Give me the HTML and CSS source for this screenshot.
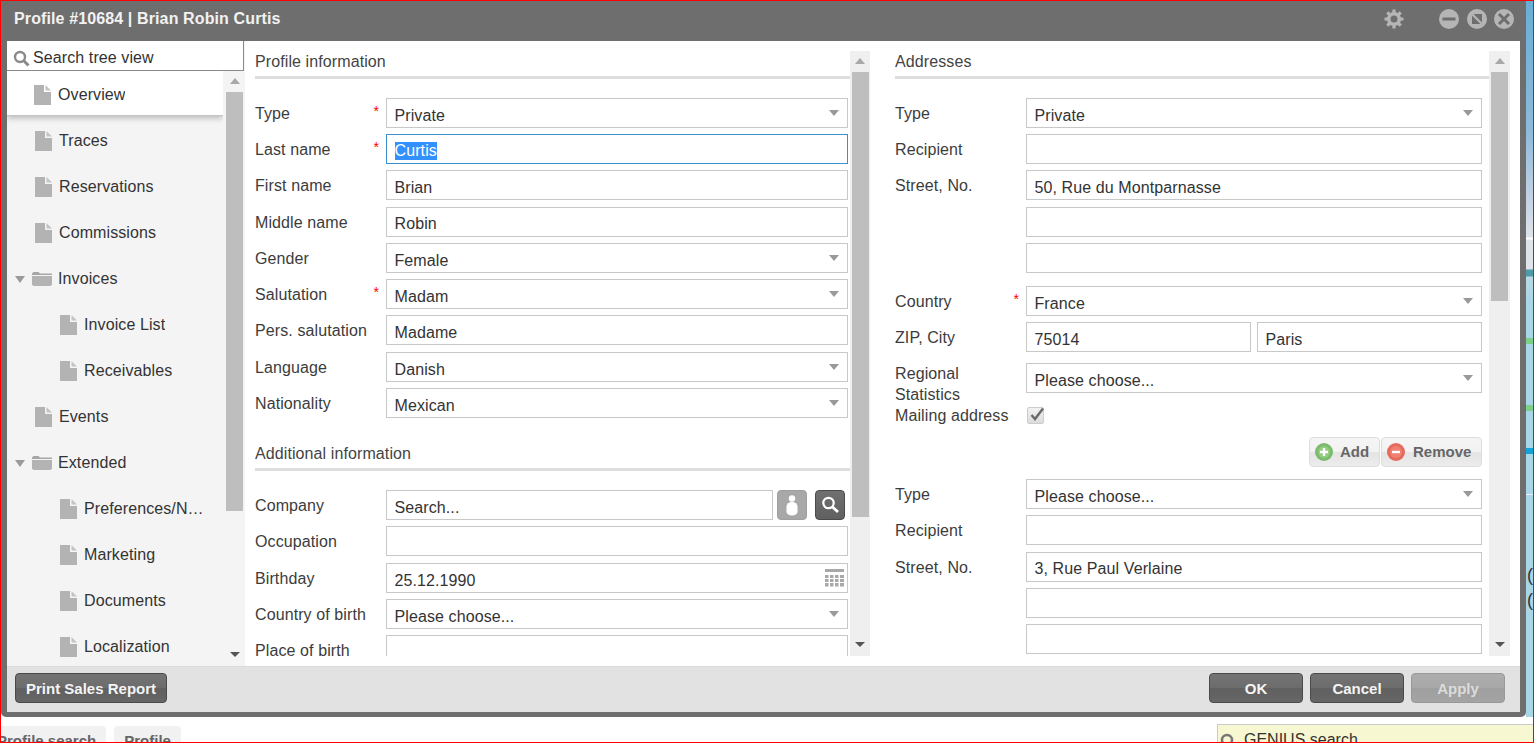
FILE: index.html
```html
<!DOCTYPE html>
<html lang="en">
<head>
    <meta charset="UTF-8">
    <title>Profile #10684 | Brian Robin Curtis</title>
    <link rel="stylesheet" href="styles.css">
</head>
<body>
<div class="desktop">
    <div class="side-strip"><span class="paren paren-one">(</span><span class="paren paren-two">(</span></div>

    <div class="tabs">
        <div class="tab">Profile search</div>
        <div class="tab">Profile</div>
    </div>

    <div class="genius">
        <svg class="genius-icon" width="16" height="16" viewBox="0 0 16 16"><circle cx="7" cy="7" r="5" fill="none" stroke="#777" stroke-width="2.5"/></svg>
        <span>GENIUS search</span>
    </div>

    <div class="dialog">
        <div class="dialog-header">
            <div class="dialog-title">Profile #10684 | Brian Robin Curtis</div>
            <svg class="gear" width="22" height="22" viewBox="0 0 22 22">
                <path d="M11 1.500v4M11 16.500v4M1.500 11h4M16.500 11h4M4.300 4.300l2.800 2.800M14.900 14.900l2.800 2.800M17.700 4.300l-2.800 2.800M7.100 14.900l-2.800 2.800" stroke="#b5b5b5" stroke-width="3.200"/>
                <circle cx="11" cy="11" r="5.300" fill="none" stroke="#b5b5b5" stroke-width="3.600"/>
            </svg>
            <div class="win-buttons">
                <svg width="20" height="20" viewBox="0 0 20 20"><circle cx="10" cy="10" r="10" fill="#b5b5b5"/><rect x="3.500" y="8.500" width="13" height="3" fill="#6e6e6e"/></svg>
                <svg width="20" height="20" viewBox="0 0 20 20"><circle cx="10" cy="10" r="10" fill="#b5b5b5"/><rect x="5" y="5" width="10" height="10" fill="#6e6e6e"/><path d="M4.500 4.500L15.500 15.500" stroke="#b5b5b5" stroke-width="2.200"/></svg>
                <svg width="20" height="20" viewBox="0 0 20 20"><circle cx="10" cy="10" r="10" fill="#b5b5b5"/><path d="M5 5L15 15M15 5L5 15" stroke="#6e6e6e" stroke-width="3"/></svg>
            </div>
        </div>

        <div class="dialog-body">
            <div class="tree-pane">
                <div class="tree-search">
                    <svg width="17" height="17" viewBox="0 0 17 17"><circle cx="7" cy="7" r="5" fill="none" stroke="#8a8a8a" stroke-width="2.400"/><path d="M10.800 10.800L15.500 15.500" stroke="#8a8a8a" stroke-width="3"/></svg>
                    <input class="tree-search-input" placeholder="Search tree view">
                </div>
                <div class="tree-main">
                    <div class="tree-list">
                        <div class="tree-item tree-active"><svg class="doc"><use href="#doc"/></svg><span class="tree-text">Overview</span></div>
                        <div class="tree-item"><svg class="doc"><use href="#doc"/></svg><span class="tree-text">Traces</span></div>
                        <div class="tree-item"><svg class="doc"><use href="#doc"/></svg><span class="tree-text">Reservations</span></div>
                        <div class="tree-item"><svg class="doc"><use href="#doc"/></svg><span class="tree-text">Commissions</span></div>
                        <div class="tree-item tree-folder"><span class="tree-arrow"></span><svg class="folder"><use href="#folder"/></svg><span class="tree-text">Invoices</span></div>
                        <div class="tree-item tree-sub"><svg class="doc"><use href="#doc"/></svg><span class="tree-text">Invoice List</span></div>
                        <div class="tree-item tree-sub"><svg class="doc"><use href="#doc"/></svg><span class="tree-text">Receivables</span></div>
                        <div class="tree-item"><svg class="doc"><use href="#doc"/></svg><span class="tree-text">Events</span></div>
                        <div class="tree-item tree-folder"><span class="tree-arrow"></span><svg class="folder"><use href="#folder"/></svg><span class="tree-text">Extended</span></div>
                        <div class="tree-item tree-sub"><svg class="doc"><use href="#doc"/></svg><span class="tree-text">Preferences/Notes</span></div>
                        <div class="tree-item tree-sub"><svg class="doc"><use href="#doc"/></svg><span class="tree-text">Marketing</span></div>
                        <div class="tree-item tree-sub"><svg class="doc"><use href="#doc"/></svg><span class="tree-text">Documents</span></div>
                        <div class="tree-item tree-sub"><svg class="doc"><use href="#doc"/></svg><span class="tree-text">Localization</span></div>
                    </div>
                    <div class="scrollbar tree-scrollbar">
                        <span class="sb-up"></span>
                        <span class="sb-thumb"></span>
                        <span class="sb-down"></span>
                    </div>
                </div>
            </div>

            <div class="content">
                <div class="column column-left">
                    <div class="column-inner">
                        <div class="section-title">Profile information</div>
                        <div class="rows">
                            <div class="row"><label class="row-label">Type<i class="req">*</i></label><div class="field select">Private</div></div>
                            <div class="row"><label class="row-label">Last name<i class="req">*</i></label><div class="field field-focus"><span class="selected">Curtis</span></div></div>
                            <div class="row"><label class="row-label">First name</label><input class="field" value="Brian"></div>
                            <div class="row"><label class="row-label">Middle name</label><input class="field" value="Robin"></div>
                            <div class="row"><label class="row-label">Gender</label><div class="field select">Female</div></div>
                            <div class="row"><label class="row-label">Salutation<i class="req">*</i></label><div class="field select">Madam</div></div>
                            <div class="row"><label class="row-label">Pers. salutation</label><input class="field" value="Madame"></div>
                            <div class="row"><label class="row-label">Language</label><div class="field select">Danish</div></div>
                            <div class="row"><label class="row-label">Nationality</label><div class="field select">Mexican</div></div>
                        </div>

                        <div class="section-title section-next">Additional information</div>
                        <div class="rows">
                            <div class="row">
                                <label class="row-label">Company</label>
                                <div class="company">
                                    <input class="field" value="Search...">
                                    <button class="icon-btn icon-btn-light">
                                        <svg width="16" height="22" viewBox="0 0 16 22"><circle cx="8" cy="4.500" r="3.200" fill="#fff"/><path d="M2.500 12.500a5.500 4.500 0 0 1 11 0V18a5.500 3.500 0 0 1-11 0z" fill="#fff"/></svg>
                                    </button>
                                    <button class="icon-btn icon-btn-dark">
                                        <svg width="20" height="20" viewBox="0 0 20 20"><circle cx="8.500" cy="8" r="5.200" fill="none" stroke="#fff" stroke-width="2.200"/><path d="M12.500 12L18 17" stroke="#fff" stroke-width="2.800"/></svg>
                                    </button>
                                </div>
                            </div>
                            <div class="row"><label class="row-label">Occupation</label><input class="field"></div>
                            <div class="row">
                                <label class="row-label">Birthday</label>
                                <div class="field date-field">25.12.1990
                                    <svg width="19" height="18" viewBox="0 0 19 18">
                                        <rect width="19" height="3" fill="#a8a8a8"/>
                                        <path d="M0 6h3.500v3H0zM5 6h3.500v3H5zM10 6h3.500v3H10zM15 6h4v3h-4zM0 10h3.500v3H0zM5 10h3.500v3H5zM10 10h3.500v3H10zM15 10h4v3h-4zM0 14h3.500v3.500H0zM5 14h3.500v3.500H5zM10 14h3.500v3.500H10zM15 14h4v3.500h-4z" fill="#a8a8a8"/>
                                    </svg>
                                </div>
                            </div>
                            <div class="row"><label class="row-label">Country of birth</label><div class="field select">Please choose...</div></div>
                            <div class="row"><label class="row-label">Place of birth</label><input class="field"></div>
                        </div>
                    </div>
                    <div class="scrollbar left-scrollbar">
                        <span class="sb-up"></span>
                        <span class="sb-thumb"></span>
                        <span class="sb-down"></span>
                    </div>
                </div>

                <div class="column column-right">
                    <div class="column-inner">
                        <div class="section-title">Addresses</div>
                        <div class="rows">
                            <div class="row"><label class="row-label">Type</label><div class="field select">Private</div></div>
                            <div class="row"><label class="row-label">Recipient</label><input class="field"></div>
                            <div class="row"><label class="row-label">Street, No.</label><input class="field" value="50, Rue du Montparnasse"></div>
                            <div class="row"><span></span><input class="field"></div>
                            <div class="row"><span></span><input class="field"></div>
                            <div class="row row-country"><label class="row-label">Country<i class="req">*</i></label><div class="field select">France</div></div>
                            <div class="row">
                                <label class="row-label">ZIP, City</label>
                                <div class="zip-city"><input class="field" value="75014"><input class="field" value="Paris"></div>
                            </div>
                            <div class="row row-regional"><label class="row-label row-label-wrap">Regional Statistics</label><div class="field select">Please choose...</div></div>
                            <div class="row row-mailing">
                                <label class="row-label row-label-mail">Mailing address</label>
                                <span class="check">
                                    <svg width="17" height="17" viewBox="0 0 17 17"><path d="M3.500 8l3.500 4L15 1.500" fill="none" stroke="#6a6a6a" stroke-width="2.400"/></svg>
                                </span>
                            </div>
                            <div class="add-remove">
                                <button class="light-btn add-btn">
                                    <svg width="18" height="18" viewBox="0 0 18 18"><circle cx="9" cy="9" r="9" fill="#7dbb6c"/><circle cx="9" cy="9" r="6" fill="#93cd80"/><path d="M9 5v8M5 9h8" stroke="#fff" stroke-width="2.400"/></svg>Add
                                </button>
                                <button class="light-btn remove-btn">
                                    <svg width="18" height="18" viewBox="0 0 18 18"><circle cx="9" cy="9" r="9" fill="#e56a5c"/><circle cx="9" cy="9" r="6" fill="#ef8073"/><path d="M5 9h8" stroke="#fff" stroke-width="2.400"/></svg>Remove
                                </button>
                            </div>
                            <div class="row row-second"><label class="row-label">Type</label><div class="field select">Please choose...</div></div>
                            <div class="row"><label class="row-label">Recipient</label><input class="field"></div>
                            <div class="row"><label class="row-label">Street, No.</label><input class="field" value="3, Rue Paul Verlaine"></div>
                            <div class="row"><span></span><input class="field"></div>
                            <div class="row"><span></span><input class="field"></div>
                        </div>
                    </div>
                    <div class="scrollbar right-scrollbar">
                        <span class="sb-up"></span>
                        <span class="sb-thumb"></span>
                        <span class="sb-down"></span>
                    </div>
                </div>
            </div>
        </div>

        <div class="dialog-footer">
            <button class="dark-btn">Print Sales Report</button>
            <div class="footer-actions">
                <button class="dark-btn action-btn">OK</button>
                <button class="dark-btn action-btn">Cancel</button>
                <button class="dark-btn action-btn btn-disabled">Apply</button>
            </div>
        </div>
    </div>
</div>

<svg class="sprites" width="0" height="0">
    <symbol id="doc" viewBox="0 0 17 20">
        <path d="M0 0h10v7h7v13H0z" fill="#b3b3b3"/>
        <path d="M11.500 0L17 5.500h-5.500z" fill="#c4c4c4"/>
    </symbol>
    <symbol id="folder" viewBox="0 0 20 14">
        <path d="M0 1.500L1.500 0h5L8 1.500h12V3H0z" fill="#a6a6a6"/>
        <path d="M0 4h20v8.500L18.500 14h-17L0 12.500z" fill="#b3b3b3"/>
    </symbol>
</svg>
</body>
</html>
```

FILE: styles.css
```css
* {
    box-sizing: border-box;
}
html, body {
    margin: 0;
    padding: 0;
    height: 100%;
    overflow: hidden;
}
body {
    font-family: "Liberation Sans", Arial, sans-serif;
    font-size: 16px;
    letter-spacing: 0.1px;
    color: #333;
    background: #fff;
}
input {
    font-family: inherit;
    font-size: inherit;
    letter-spacing: inherit;
}
button {
    font-family: inherit;
    font-size: 15px;
    letter-spacing: 0;
}
.sprites {
    position: absolute;
}

/* page behind the dialog */
.desktop {
    position: relative;
    width: 1534px;
    height: 743px;
    border: 1px solid #f00;
    overflow: hidden;
    background: #fff;
}
.side-strip {
    position: absolute;
    top: 0;
    right: 0;
    bottom: 25px;
    width: 7px;
    background: linear-gradient(to bottom,
        #69aed6 0, #8dbada 130px, #c6d3e4 200px, #dfe3ea 236px, #fff 237px, #fff 238px,
        #dfe3ea 239px, #dfe3ea 268px, #4f9aa8 269px, #4f9aa8 275px, #b9d9e6 276px, #a9d6e6 300px,
        #a9d6e6 337px, #7dd08a 337px, #7dd08a 343px, #a9d6e6 343px,
        #a9d6e6 404px, #7dd08a 404px, #7dd08a 410px, #a9d6e6 410px,
        #a9d6e6 447px, #12a3d8 447px, #12a3d8 453px, #a9d6e6 453px,
        #a9d6e6 493px, #eef 493px, #eef 494px, #a9d6e6 494px);
}
.paren {
    position: absolute;
    left: 1px;
    font-size: 18px;
    color: #333;
}
.paren-one {
    top: 564px;
}
.paren-two {
    top: 589px;
}
.tabs {
    position: absolute;
    left: -14px;
    top: 725px;
    display: flex;
    gap: 8px;
}
.tab {
    height: 30px;
    padding: 6px 10px 0;
    background: #f1f1f1;
    border-radius: 4px 4px 0 0;
    font-size: 15px;
    letter-spacing: 0;
    font-weight: bold;
    color: #666;
}
.genius {
    position: absolute;
    left: 1216px;
    top: 723px;
    width: 320px;
    height: 30px;
    padding: 6px 0 0 2px;
    display: flex;
    gap: 8px;
    background: #f7f7d2;
    border: 1px solid #ccc;
    color: #333;
    letter-spacing: 0;
}
.genius-icon {
    margin-top: 2px;
}

/* dialog */
.dialog {
    position: absolute;
    left: 0;
    top: 0;
    width: 1525px;
    height: 716px;
    padding: 0 6px 5px;
    display: flex;
    flex-direction: column;
    background: #6e6e6e;
    border-radius: 0 0 5px 5px;
}
.dialog-header {
    height: 40px;
    flex: none;
    display: flex;
    align-items: center;
    padding-bottom: 5px;
}
.dialog-title {
    padding-left: 7px;
    font-weight: bold;
    letter-spacing: 0.12px;
    color: #f2f2f2;
    flex: 1;
}
.gear {
    margin-right: 34px;
}
.win-buttons {
    display: flex;
    gap: 7.5px;
    margin-right: 6px;
}
.dialog-body {
    flex: 1;
    min-height: 0;
    display: flex;
    background: #fff;
}
.dialog-footer {
    height: 46px;
    flex: none;
    padding: 6px 15px 0 8px;
    display: flex;
    justify-content: space-between;
    background: #e2e2e2;
    border-top: 1px solid #dcdcdc;
}
.footer-actions {
    display: flex;
    gap: 7px;
}
.dark-btn {
    height: 30px;
    padding: 0 10px;
    border: 1px solid #4a4a4a;
    border-radius: 4px;
    background: linear-gradient(to bottom, #747474 0, #6c6c6c 50%, #606060 50%, #666 100%);
    color: #f4f4f4;
    font-weight: bold;
}
.action-btn {
    width: 94px;
}
.btn-disabled {
    border-color: #999;
    background: linear-gradient(to bottom, #adadad 0, #a8a8a8 50%, #9f9f9f 50%, #a4a4a4 100%);
    color: #dcdcdc;
}

/* tree on the left */
.tree-pane {
    width: 238px;
    flex: none;
    display: flex;
    flex-direction: column;
    background: #f4f4f4;
}
.tree-search {
    height: 30px;
    flex: none;
    display: flex;
    align-items: center;
    gap: 3px;
    padding: 5px 0 0 6px;
    background: #fff;
    border-bottom: 1px solid #8a8a8a;
    border-right: 1px solid #8a8a8a;
    margin-right: 1px;
}
.tree-search-input {
    flex: 1;
    min-width: 0;
    border: 0;
    outline: 0;
    padding: 0;
    background: transparent;
    color: #333;
}
.tree-search-input::placeholder {
    color: #333;
    opacity: 1;
}
.tree-main {
    flex: 1;
    min-height: 0;
    display: flex;
}
.tree-list {
    width: 216px;
    flex: none;
    overflow: hidden;
}
.tree-item {
    height: 46px;
    display: flex;
    align-items: center;
    padding: 2px 0 0 28px;
}
.tree-active {
    height: 45px;
    margin-bottom: 1px;
    padding: 3px 0 0 27px;
    background: #fff;
    box-shadow: 0 2px 6px rgba(0, 0, 0, 0.25);
    border-bottom: 1px solid #c4c4c4;
}
.tree-sub {
    padding-left: 53px;
}
.tree-folder {
    padding-left: 8px;
}
.tree-arrow {
    width: 0;
    height: 0;
    margin-right: 7px;
    border-left: 5.5px solid transparent;
    border-right: 5.5px solid transparent;
    border-top: 7px solid #9a9a9a;
}
.doc {
    width: 17px;
    height: 20px;
    flex: none;
    margin-right: 7px;
}
.folder {
    width: 20px;
    height: 14px;
    flex: none;
    margin-right: 6px;
}
.tree-text {
    overflow: hidden;
    white-space: nowrap;
    text-overflow: ellipsis;
    max-width: 120px;
}

/* scrollbars */
.scrollbar {
    display: flex;
    flex-direction: column;
    align-items: center;
    flex: none;
    background: #efefef;
}
.sb-up, .sb-down {
    width: 0;
    height: 0;
    border-left: 5px solid transparent;
    border-right: 5px solid transparent;
}
.sb-up {
    margin: 7px 0 8px;
    border-bottom: 6px solid #a8a8a8;
}
.sb-down {
    margin-top: auto;
    margin-bottom: 9px;
    border-top: 5px solid #555;
}
.sb-thumb {
    width: 17px;
    background: #bebebe;
}
.tree-scrollbar {
    width: 21px;
    margin-left: 1px;
    background: #f4f4f4;
}
.left-scrollbar {
    width: 20px;
}
.left-scrollbar .sb-thumb {
    height: 445px;
}
.right-scrollbar {
    width: 21px;
}
.right-scrollbar .sb-thumb {
    height: 229px;
}
.tree-scrollbar .sb-thumb {
    height: 419px;
}

/* form columns */
.content {
    flex: 1;
    min-width: 0;
    display: flex;
    gap: 25px;
    padding: 10px;
}
.column {
    display: flex;
    min-width: 0;
    overflow: hidden;
}
.column-left {
    width: 615px;
}
.column-right {
    width: 615px;
}
.column-inner {
    flex: 1;
    min-width: 0;
}
.section-title {
    height: 28px;
    padding-top: 1px;
    line-height: 19px;
    border-bottom: 3px solid #ddd;
    margin-bottom: 19px;
    color: #444;
}
.section-next {
    margin-top: 25.2px;
}
.rows {
    display: flex;
    flex-direction: column;
    gap: 6.24px;
}
.row {
    display: grid;
    grid-template-columns: 131px 1fr;
    min-height: 30px;
    flex: none;
}
.column-left .row {
    margin-right: 2px;
}
.column-right .row {
    margin-right: 7px;
}
.row-label {
    display: flex;
    justify-content: space-between;
    padding: 6px 7px 0 0;
    line-height: 20px;
    color: #3c3c3c;
}
.row-label-wrap {
    display: block;
    padding-top: 0;
    line-height: 21px;
    width: 90px;
}
.req {
    margin-top: -1px;
    color: #f00;
    font-style: normal;
    font-size: 14px;
    line-height: 16px;
}
.field {
    width: 100%;
    height: 30px;
    padding: 5px 8px 0 7.5px;
    border: 1px solid #c8c8c8;
    outline: 0;
    background: #fff;
    color: #333;
    line-height: 24px;
    white-space: nowrap;
}
.field-focus {
    padding-top: 4px;
    border-color: #3a8fd0;
}
.selected {
    background: #3390ff;
    color: #fff;
    display: inline-block;
    line-height: 18px;
}
.select {
    position: relative;
}
.select::after {
    content: "";
    position: absolute;
    right: 8px;
    top: 11px;
    border-left: 5.5px solid transparent;
    border-right: 5.5px solid transparent;
    border-top: 6px solid #999;
}
.company {
    display: flex;
    align-items: center;
}
.company .field {
    flex: 1;
    min-width: 0;
}
.icon-btn {
    width: 30px;
    height: 30px;
    flex: none;
    padding: 0;
    display: flex;
    align-items: center;
    justify-content: center;
    border-radius: 4px;
}
.icon-btn-light {
    margin-left: 4px;
    border: 1px solid #a0a0a0;
    background: #a8a8a8;
}
.icon-btn-dark {
    margin: 0 3px 0 8px;
    border: 1px solid #4a4a4a;
    background: linear-gradient(to bottom, #707070 0, #606060 100%);
}
.date-field {
    display: flex;
    justify-content: space-between;
    align-items: flex-start;
    padding-right: 3px;
}
.zip-city {
    display: flex;
    gap: 6px;
}
.zip-city .field {
    flex: 1;
    min-width: 0;
}
.row-country {
    margin-top: 6.8px;
}
.row-regional {
    margin-top: 4.8px;
    min-height: 30px;
    height: 30px;
}
.row-mailing {
    min-height: 20px;
    height: 20px;
    margin-top: 6px;
    align-items: center;
}
.row-label-mail {
    display: block;
    height: 20px;
    padding: 1px 0 0;
    white-space: nowrap;
}
.check {
    width: 17px;
    height: 17px;
    margin-left: 1px;
    border: 1px solid #ccc;
    border-radius: 2px;
    background: linear-gradient(to bottom, #f2f2f2, #dcdcdc);
    display: block;
}
.check svg {
    display: block;
    margin: -1px 0 0 0;
}
.add-remove {
    display: flex;
    justify-content: flex-end;
    gap: 1px;
    margin: 5px 7px 0 0;
}
.light-btn {
    height: 30px;
    padding: 0 0 0 5px;
    display: flex;
    align-items: center;
    gap: 7px;
    border: 1px solid #ddd;
    border-radius: 4px;
    background: linear-gradient(to bottom, #f5f5f5 0, #f2f2f2 50%, #e4e4e4 50%, #ececec 100%);
    color: #666;
    font-weight: bold;
}
.add-btn {
    width: 71px;
}
.remove-btn {
    width: 101px;
    gap: 8px;
}
.row-second {
    margin-top: 6.3px;
}
```
